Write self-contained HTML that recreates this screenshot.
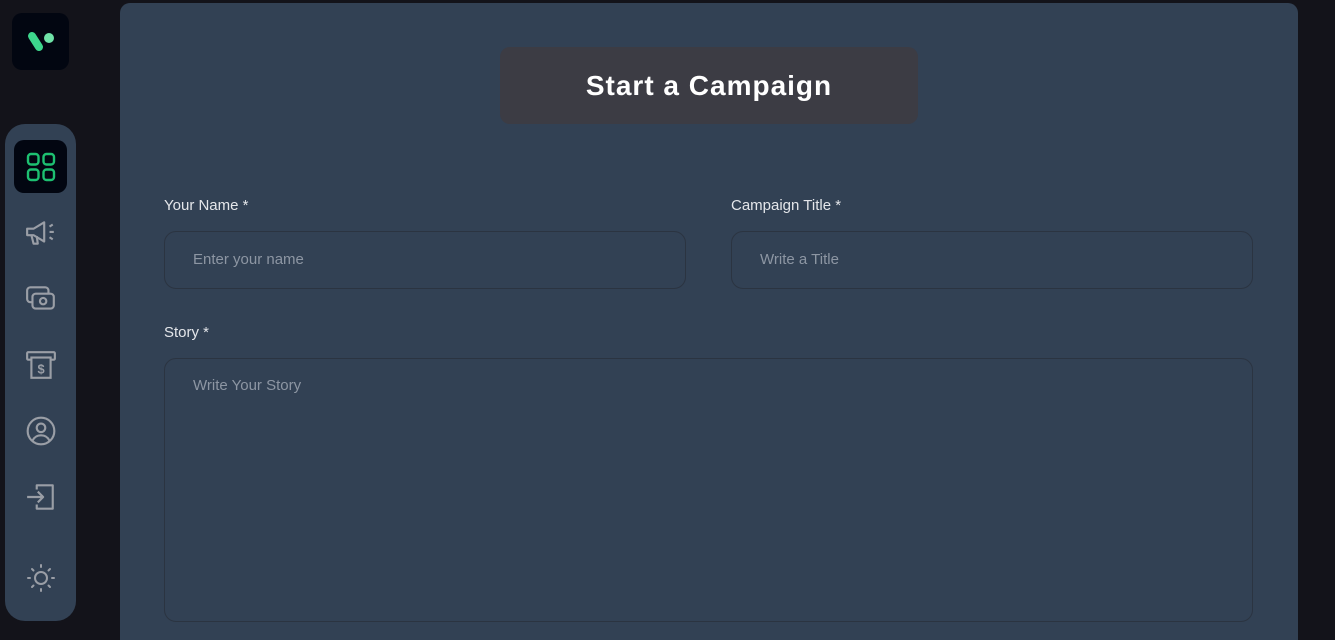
<!DOCTYPE html>
<html><head><meta charset="utf-8"><style>
*{box-sizing:border-box;margin:0;padding:0}
html,body{width:1335px;height:640px;overflow:hidden}
body{background:#13131a;font-family:"Liberation Sans",sans-serif;position:relative}
.logo{position:absolute;left:12px;top:13px;width:57px;height:57px;background:#020611;border-radius:10px}
.side{position:absolute;left:5px;top:124px;width:71px;height:497px;background:#324154;border-radius:20px}
.ic{position:absolute;left:9px;width:53px;height:53px;display:flex;align-items:center;justify-content:center}
.act{background:#020611;border-radius:10px}
.main{position:absolute;left:120px;top:3px;width:1178px;height:637px;background:#324154;border-radius:10px 10px 0 0}
.title{position:absolute;left:380px;top:44px;width:418px;height:77px;background:#3c3c44;border-radius:10px;color:#fff;font-weight:bold;font-size:28px;display:flex;align-items:center;justify-content:center;letter-spacing:1px}
.lbl{position:absolute;color:#e4e6ea;font-size:15px}
.inp{position:absolute;border:1px solid #2b3441;border-radius:12px;color:#8d96a3;font-size:15px;padding-left:28px}
</style></head><body>
<div class="logo"><svg width="57" height="57" viewBox="0 0 57 57"><line x1="20" y1="23" x2="27" y2="34" stroke="#3dd68c" stroke-width="8" stroke-linecap="round"/><circle cx="37" cy="25" r="5" fill="#6fe3a8"/></svg></div>
<div class="side">
<div class="ic act" style="top:16px"><svg width="30" height="30" viewBox="0 0 30 30" fill="none" stroke="#1dc071" stroke-width="2.4"><rect x="2" y="2" width="10.5" height="10.5" rx="3"/><rect x="17.5" y="2" width="10.5" height="10.5" rx="3"/><rect x="2" y="17.5" width="10.5" height="10.5" rx="3"/><rect x="17.5" y="17.5" width="10.5" height="10.5" rx="3"/></svg></div>
<div class="ic" style="top:82px"><svg width="32" height="32" viewBox="0 0 30 30" fill="none" stroke="#9a9ea6" stroke-width="2" stroke-linejoin="round"><path d="M2 11h6l10-6v18L8 17H2z"/><path d="M6 17l2 8h4l-1-7"/><path d="M23 9l3-2M23 14h4M23 19l3 2"/></svg></div>
<div class="ic" style="top:148px"><svg width="32" height="32" viewBox="0 0 30 30" fill="none" stroke="#9a9ea6" stroke-width="2"><rect x="2" y="4" width="20" height="14" rx="3"/><rect x="7" y="10" width="20" height="14" rx="3" fill="#324154"/><circle cx="17" cy="17" r="3"/></svg></div>
<div class="ic" style="top:214px"><svg width="32" height="32" viewBox="0 0 30 30" fill="none" stroke="#9a9ea6" stroke-width="2"><rect x="2" y="3" width="26" height="7" rx="1"/><rect x="6" y="8" width="18" height="19" fill="#324154"/><text x="15" y="23" font-size="12" font-family="Liberation Sans" fill="#9a9ea6" stroke="none" text-anchor="middle" font-weight="bold">$</text></svg></div>
<div class="ic" style="top:280px"><svg width="32" height="32" viewBox="0 0 30 30" fill="none" stroke="#9a9ea6" stroke-width="2"><circle cx="15" cy="15" r="12.5"/><circle cx="15" cy="12" r="4"/><path d="M7 24c2-4 5-5 8-5s6 1 8 5"/></svg></div>
<div class="ic" style="top:346px"><svg width="32" height="32" viewBox="0 0 30 30" fill="none" stroke="#9a9ea6" stroke-width="2" stroke-linejoin="round"><path d="M11 8V4h15v22H11v-4"/><path d="M2 15h15M12 10l5 5-5 5"/></svg></div>
<div class="ic" style="top:427px"><svg width="30" height="30" viewBox="0 0 30 30" fill="none" stroke="#9a9ea6" stroke-width="2" stroke-linecap="round"><circle cx="15" cy="15" r="6"/><path d="M15 2v2M15 26v2M2 15h2M26 15h2M6 6l1.5 1.5M22.5 22.5L24 24M6 24l1.5-1.5M22.5 7.5L24 6"/></svg></div>
</div>
<div class="main">
<div class="title">Start a Campaign</div>
<div class="lbl" style="left:44px;top:194px">Your Name *</div>
<div class="inp" style="left:44px;top:228px;width:522px;height:58px;line-height:56px">Enter your name</div>
<div class="lbl" style="left:611px;top:194px">Campaign Title *</div>
<div class="inp" style="left:611px;top:228px;width:522px;height:58px;line-height:56px">Write a Title</div>
<div class="lbl" style="left:44px;top:321px">Story *</div>
<div class="inp" style="left:44px;top:355px;width:1089px;height:264px;padding-top:18px">Write Your Story</div>
</div>
</body></html>
